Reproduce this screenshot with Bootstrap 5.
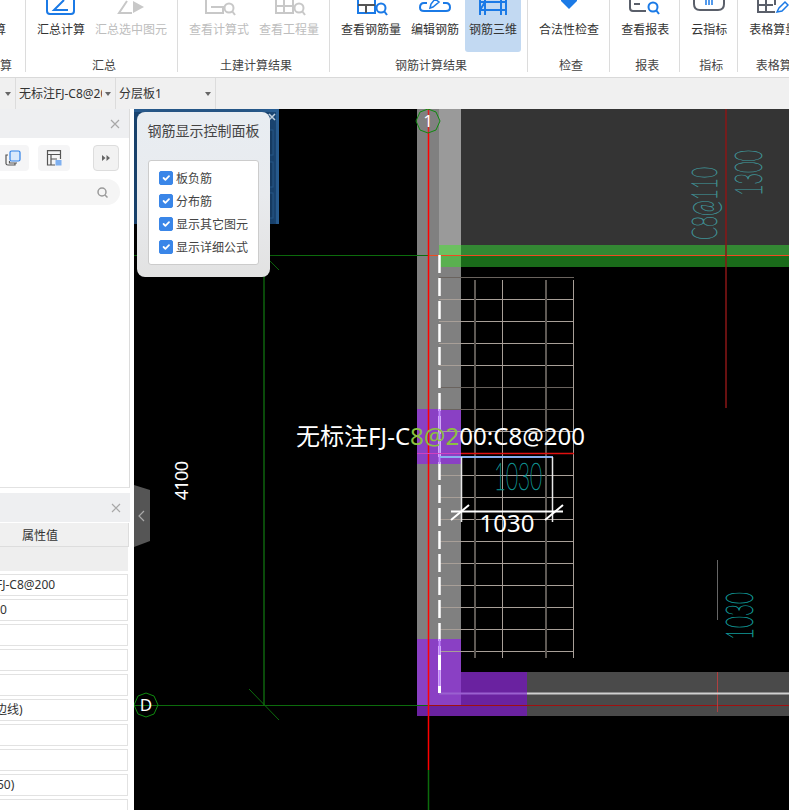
<!DOCTYPE html>
<html lang="zh-CN">
<head>
  <meta charset="UTF-8">
  <title>钢筋三维</title>
  <link href="https://cdn.jsdelivr.net/npm/bootstrap@5.3.3/dist/css/bootstrap.min.css" rel="stylesheet">
  <style>
    html, body { height: 810px; overflow: hidden; }
    body { font-family: "Noto Sans", "Noto Sans CJK SC", sans-serif; font-size: 12px; color: #333; background: #fff; }

    .rb-bar { height: 77px; }
    .rb-group { height: 72px; padding: 0 5px 0 6px; border-color: #dcdcdc !important; flex-shrink: 0; }
    .rb-group-first { width: 26px; padding: 0; }
    .rb-group-last { min-width: 78px; border: 0 !important; }
    .rb-items { height: 52px; }
    .rb-btn { padding: 0 5px; height: 52px; line-height: 16px; white-space: nowrap; }
    .rb-btn.off { color: #bdbdbd; }
    .rb-btn.on { background: #c2d9f2; border-radius: 0 0 3px 3px; padding: 0 4px; margin: 0 1px; }
    .rb-icon { display: block; height: 16px; margin-bottom: 6px; }
    .rb-label { line-height: 20px; height: 20px; margin-top: 4px; text-align: center; padding-left: 4px; white-space: nowrap; color: #444; }
    .clip-a { margin-right: 19px; padding: 22px 0 0; }
    .clip-b { margin-right: 13px; text-align: right; padding: 0; }

    .tool-bar { height: 32px; background: #f0f0f0; border-top: 1px solid #d9d9d9; }
    .combo { height: 31px; border-right: 1px solid #dcdcdc; padding: 0 4px 0 3px; flex-shrink: 0; overflow: hidden; }
    .combo-a { width: 16px; }
    .combo-b, .combo-c { width: 100px; }
    .combo-text { flex: 1 1 auto; overflow: hidden; white-space: nowrap; line-height: 31px; }
    .combo-b .combo-text { max-width: 83px; }
    .caret-d { width: 0; height: 0; border: 3px solid transparent; border-top: 4px solid #666; border-bottom: 0; flex-shrink: 0; margin-left: auto; }

    .work { height: 701px; }
    .side { width: 134px; padding-right: 4px; flex-shrink: 0; overflow: hidden; }
    .side-pane { width: 130px; border-right: 1px solid #dcdcdc; overflow: hidden; }
    .pane-top { height: 379px; border-bottom: 1px solid #e2e2e2; flex-shrink: 0; }
    .pane-bottom { margin-top: 5px; flex: 1 1 auto; min-height: 0; }
    .pane-head { height: 29px; background: #eeeff1; padding-right: 9px; flex-shrink: 0; }
    .tool-row { height: 26px; margin-top: 7px; }
    .tool-box { height: 26px; background: #f5f5f6; border-radius: 4px; }
    .tool-box-a { width: 37px; margin-left: -8px; padding-left: 13px; }
    .tool-box-b { width: 32px; margin-left: 9px; padding-left: 8px; }
    .tool-box-c { width: 26px; margin-left: 23px; background: #f2f2f2; border: 1px solid #ddd; }
    .search-pill { height: 26px; width: 140px; margin: 8px 0 0 -20px; background: #f5f5f5; border-radius: 13px; padding-right: 12px; }
    .prop-head { height: 24px; line-height: 25px; width: 129px; background: #f0f0f0; border-right: 1px solid #ddd; border-bottom: 1px solid #ddd; text-align: center; padding-right: 48px; margin-top: 1px; white-space: nowrap; flex-shrink: 0; }
    .prop-group { height: 24px; width: 128px; background: #eee; flex-shrink: 0; }
    .prop-list { margin-top: 3px; gap: 3px; }
    .prop-row { height: 22px; width: 128px; background: #fff; border: 1px solid #e2e2e2; border-left: 0; line-height: 19px; white-space: nowrap; overflow: hidden; flex-shrink: 0; }
    .val-a { margin-left: -4px; }
    .val-b { margin-left: -5px; }
    .val-c { margin-left: -3px; }

    .cad { background: #000; overflow: hidden; }
    .cad svg { display: block; }
    .cad-label { font-family: "Noto Sans", "Noto Sans CJK SC", sans-serif; }
    .cad-thin { font-family: Lato, Roboto, sans-serif; font-weight: 100; stroke-width: .7px; }
    .rebar-panel { position: absolute; left: 3px; top: 3px; width: 133px; height: 165px; border-radius: 8px; background: linear-gradient(#e8edf2, #e9ebee 50%, #e2e2e2); box-shadow: 0 0 26px rgba(0, 0, 0, .28); }
    .rebar-title { font-size: 14px; line-height: 20px; text-align: center; color: #444; padding-top: 9px; height: 48px; white-space: nowrap; }
    .rebar-box { margin: 0 11px; height: 105px; background: #fff; border: 1px solid #ccc; border-radius: 3px; padding: 10px 0 0 10px; }
    .rebar-box .form-check { min-height: 23px; height: 23px; padding-left: 17px; margin: 0; line-height: 15px; color: #444; white-space: nowrap; }
    .rebar-box .form-check-input { width: 14px; height: 14px; margin: 0 0 0 -17px; border-radius: 2px; background-color: #3a86e8; border-color: #3a86e8; opacity: 1; }
    .rebar-box .form-check-label { opacity: 1; }
  </style>
</head>
<body>

  <div class="d-flex flex-column">

    <!-- ribbon -->
    <div class="rb-bar d-flex overflow-hidden">
      <div class="rb-group rb-group-first border-end d-flex flex-column align-items-end">
        <div class="rb-items d-flex justify-content-end"><div class="rb-btn clip-a">计算</div></div>
        <div class="rb-label clip-b">计算</div>
      </div>

      <div class="rb-group border-end">
        <div class="rb-items d-flex">
          <div class="rb-btn text-center">
            <svg class="rb-icon mx-auto" width="32" height="16" viewBox="0 0 32 16" fill="none" stroke="#1b7ae6" stroke-width="2"><rect x="2" y="-8" width="27" height="22" rx="3"/><path d="M19 0 9 10H23"/></svg>
            汇总计算
          </div>
          <div class="rb-btn off text-center">
            <svg class="rb-icon mx-auto" width="30" height="16" viewBox="0 0 30 16" fill="none" stroke="#c8c8c8" stroke-width="2"><path d="M11 1 3 13H16"/><path d="M17 1 28 7 17 13Z" fill="#c8c8c8" stroke="none"/></svg>
            汇总选中图元
          </div>
        </div>
        <div class="rb-label">汇总</div>
      </div>

      <div class="rb-group border-end">
        <div class="rb-items d-flex">
          <div class="rb-btn off text-center">
            <svg class="rb-icon mx-auto" width="34" height="16" viewBox="0 0 34 16" fill="none" stroke="#c8c8c8" stroke-width="2"><path d="M4 0V13H21V7H9"/><circle cx="27" cy="8" r="4.5"/><path d="M30 11 33 15"/></svg>
            查看计算式
          </div>
          <div class="rb-btn off text-center">
            <svg class="rb-icon mx-auto" width="34" height="16" viewBox="0 0 34 16" fill="none" stroke="#c8c8c8" stroke-width="2"><path d="M4 0V13H21V0M4 6H21M12 0V13"/><circle cx="27" cy="8" r="4.5"/><path d="M30 11 33 15"/></svg>
            查看工程量
          </div>
        </div>
        <div class="rb-label">土建计算结果</div>
      </div>

      <div class="rb-group border-end">
        <div class="rb-items d-flex">
          <div class="rb-btn text-center">
            <svg class="rb-icon mx-auto" width="34" height="16" viewBox="0 0 34 16" stroke-width="2" fill="none"><path d="M4 0V13H21V0" stroke="#1b7ae6"/><path d="M4 5H21M12 5V13" stroke="#555"/><circle cx="27" cy="8" r="4.5" stroke="#1b7ae6"/><path d="M30 11 33 15" stroke="#1b7ae6"/></svg>
            查看钢筋量
          </div>
          <div class="rb-btn text-center">
            <svg class="rb-icon mx-auto" width="32" height="16" viewBox="0 0 32 16" fill="none" stroke="#1b7ae6" stroke-width="2"><path d="M8 3H5Q1 3 1 7.500 1 11 5 11H27Q31 11 31 7.500 31 3 27 3H24"/><path d="M11 8 12 4 16-1 20 2 14 7Z" stroke-width="1.500"/></svg>
            编辑钢筋
          </div>
          <div class="rb-btn on text-center">
            <svg class="rb-icon mx-auto" width="32" height="16" viewBox="0 0 32 16" fill="none" stroke="#1b7ae6" stroke-width="2"><path d="M3 0V15M29 0V15M24 0V15M8 0V15M3 2H29M3 10H29M8 2 3 10"/></svg>
            钢筋三维
          </div>
        </div>
        <div class="rb-label">钢筋计算结果</div>
      </div>

      <div class="rb-group border-end">
        <div class="rb-items d-flex">
          <div class="rb-btn text-center">
            <svg class="rb-icon mx-auto" width="18" height="16" viewBox="0 0 18 16"><path d="M1-1H17V1L9 9 1 1Z" fill="#1b7ae6"/></svg>
            合法性检查
          </div>
        </div>
        <div class="rb-label">检查</div>
      </div>

      <div class="rb-group border-end">
        <div class="rb-items d-flex">
          <div class="rb-btn text-center">
            <svg class="rb-icon mx-auto" width="34" height="16" viewBox="0 0 34 16" fill="none" stroke-width="2"><path d="M2-4V8Q2 11 5 11H18" stroke="#5a5f6a"/><path d="M6 4H12" stroke="#5a5f6a"/><circle cx="25" cy="7" r="4.500" stroke="#1b7ae6"/><path d="M28 10 31 14" stroke="#1b7ae6"/></svg>
            查看报表
          </div>
        </div>
        <div class="rb-label">报表</div>
      </div>

      <div class="rb-group border-end">
        <div class="rb-items d-flex">
          <div class="rb-btn text-center">
            <svg class="rb-icon mx-auto" width="34" height="16" viewBox="0 0 34 16" fill="none" stroke-width="2"><path d="M2-8V4Q2 10 8 10H26Q32 10 32 4V-8" stroke="#5a5f6a"/><path d="M14 0V5M17 0V5M20 0V5" stroke="#1b7ae6" stroke-width="1.500"/></svg>
            云指标
          </div>
        </div>
        <div class="rb-label">指标</div>
      </div>

      <div class="rb-group rb-group-last border-end">
        <div class="rb-items d-flex">
          <div class="rb-btn text-center">
            <svg class="rb-icon mx-auto" width="34" height="16" viewBox="0 0 34 16" fill="none" stroke-width="2"><path d="M2-4V12H19M2 5H17M10 0V12M19 0V5" stroke="#5a5f6a"/><path d="M21 12 23 8 29 2 32 5 26 11Z" stroke="#1b7ae6" stroke-width="1.500"/></svg>
            表格算量
          </div>
        </div>
        <div class="rb-label">表格算量</div>
      </div>
    </div>

    <!-- selector bar -->
    <div class="tool-bar d-flex">
      <div class="combo combo-a d-flex align-items-center"><span class="caret-d"></span></div>
      <div class="combo combo-b d-flex align-items-center"><span class="combo-text">无标注FJ-C8@200</span><span class="caret-d"></span></div>
      <div class="combo combo-c d-flex align-items-center"><span class="combo-text">分层板1</span><span class="caret-d"></span></div>
    </div>

    <div class="work d-flex">
      <!-- left panes -->
      <div class="side d-flex flex-column">
        <div class="side-pane pane-top">
          <div class="pane-head d-flex align-items-center justify-content-end">
            <svg width="10" height="10" viewBox="0 0 10 10" stroke="#a8a8a8" stroke-width="1.200"><path d="M1 1 9 9M9 1 1 9"/></svg>
          </div>
          <div class="tool-row d-flex">
            <div class="tool-box tool-box-a d-flex align-items-center">
              <svg width="16" height="16" viewBox="0 0 16 16" fill="none" stroke-width="1.200"><path d="M3 5H1V13.500Q1 15 3 15H10V13" stroke="#555"/><path d="M4.500 11V13H12" stroke="#555"/><rect x="5" y="1" width="10" height="10" rx="1.500" fill="#d9e8fb" stroke="#2f80e8"/></svg>
            </div>
            <div class="tool-box tool-box-b d-flex align-items-center">
              <svg width="16" height="16" viewBox="0 0 16 16" fill="none" stroke="#555" stroke-width="1.200"><path d="M9 15H1.500V.6H14.500V9M1.500 4.500H14.500M5 4.500V15M5 9H11"/><rect x="9.500" y="10" width="6" height="5.500" fill="#7fb0f0" stroke="none"/></svg>
            </div>
            <div class="tool-box tool-box-c d-flex align-items-center justify-content-center">
              <svg width="8" height="6" viewBox="0 0 8 6" fill="#666"><path d="M0 0 3.500 3 0 6ZM4.500 0 8 3 4.500 6Z"/></svg>
            </div>
          </div>
          <div class="search-pill d-flex align-items-center justify-content-end">
            <svg width="11" height="11" viewBox="0 0 11 11" fill="none" stroke="#9a9a9a" stroke-width="1.500"><circle cx="5" cy="5" r="4"/><path d="M8 8 10.500 10.500"/></svg>
          </div>
        </div>

        <div class="side-pane pane-bottom d-flex flex-column border-0">
          <div class="pane-head d-flex align-items-center justify-content-end">
            <svg width="10" height="10" viewBox="0 0 10 10" stroke="#a8a8a8" stroke-width="1.200"><path d="M1 1 9 9M9 1 1 9"/></svg>
          </div>
          <div class="prop-head">属性值</div>
          <div class="prop-group"></div>
          <div class="prop-list d-flex flex-column">
            <div class="prop-row"><div class="val-a">FJ-C8@200</div></div>
            <div class="prop-row">0</div>
            <div class="prop-row"></div>
            <div class="prop-row"></div>
            <div class="prop-row"></div>
            <div class="prop-row"><div class="val-b">边线)</div></div>
            <div class="prop-row"></div>
            <div class="prop-row"></div>
            <div class="prop-row"><div class="val-c">50)</div></div>
            <div class="prop-row"></div>
          </div>
        </div>
      </div>

      <!-- drawing area -->
      <div class="cad flex-fill position-relative">
        <svg id="cadView" width="655" height="701" viewBox="134 109 655 701" fill="none">
          <!-- floating blue window behind the panel -->
          <rect x="134" y="109" width="145" height="115" fill="#1c4a7a"/>
          <rect x="276" y="109" width="3" height="115" fill="#2b6299"/>
          <rect x="134" y="109" width="145" height="3" fill="#2b6299"/>
          <path d="M269 114 275 120M275 114 269 120" stroke="#cfe0f0" stroke-width="1.500"/>
          <g stroke="#2b6299" fill="#1a4470"><rect x="200" y="130" width="73" height="25"/><rect x="200" y="162" width="73" height="25"/><rect x="200" y="193" width="73" height="25"/></g>

          <!-- slab and walls -->
          <rect x="461" y="109" width="328" height="136" fill="#343434"/>
          <rect x="417" y="109" width="22" height="300" fill="#808080"/>
          <rect x="439" y="109" width="22" height="136" fill="#9a9a9a"/>
          <rect x="439" y="267" width="22" height="142" fill="#808080"/>
          <rect x="417" y="464" width="44" height="175" fill="#808080"/>
          <rect x="461" y="245" width="328" height="10" fill="#338833"/>
          <rect x="461" y="255" width="328" height="12" fill="#1a6b1a"/>
          <rect x="439" y="245" width="22" height="10" fill="#6cc060"/>
          <rect x="439" y="255" width="22" height="12" fill="#5ab050"/>
          <rect x="417" y="409" width="44" height="55" fill="#8a40c4"/>
          <rect x="527" y="672" width="262" height="44" fill="#4a4a4a"/>
          <rect x="417" y="672" width="110" height="44" fill="#6a22a0"/>
          <rect x="417" y="639" width="44" height="66" fill="#8a40c4"/>

          <g id="rebarGrid"></g>

          <!-- axis lines -->
          <path d="M134 255.500H428" stroke="#0c6b0c"/>
          <path d="M428 255.500H789" stroke="#f04a20"/>
          <path d="M134 705.500H428" stroke="#0c6b0c"/>
          <path d="M428 705.500H789" stroke="#a01010"/>
          <path d="M264 255V705" stroke="#0a4a0a" stroke-width="2"/>
          <path d="M249 240 279 270M249 689 279 720" stroke="#0c6b0c"/>
          <path d="M726 109V408" stroke="#8a1616" stroke-width="1.500"/>
          <path d="M717.500 560V620" stroke="#666"/>
          <path d="M717.500 672V712" stroke="#b04040"/>
          <path d="M428.500 109V770" stroke="#ff0000" stroke-width="1.500"/>
          <path d="M428.500 770V810" stroke="#0c6b0c" stroke-width="1.500"/>
          <path d="M439 693.500H527" stroke="#9a60d0" stroke-width="2"/>
          <path d="M527 693.500H789" stroke="#d0d0d0" stroke-width="2"/>
          <path d="M439.500 255V693" stroke="#fff" stroke-width="2.500" stroke-dasharray="18 5"/>
          <path d="M439.500 409V464M439.500 639V693" stroke="#c080ff" stroke-width="2"/>
          <path d="M439.500 655V670M439.500 686V693" stroke="#fff" stroke-width="3"/>

          <!-- axis bubbles -->
          <polygon points="428,109 436,112 440,121 436,130 428,133 420,130 416,121 420,112" stroke="#0f8a0f" fill="#808080" fill-opacity=".25"/>
          <text class="cad-label" x="428" y="127" font-size="17" fill="#fff" text-anchor="middle">1</text>
          <polygon points="146,693 154,696 158,705 154,714 146,717 138,714 134,705 138,696" stroke="#0f8a0f"/>
          <text class="cad-label" x="146" y="711" font-size="17" fill="#fff" text-anchor="middle">D</text>

          <!-- dimensions -->
          <path d="M417 453.500H461" stroke="#d040c0"/>
          <path d="M461 453.500H574" stroke="#e01010" stroke-width="1.500"/>
          <path d="M440 457H553" stroke="#88b0f0" stroke-width="2"/>
          <path d="M461.500 457V522M552.500 457V522" stroke="#e8e8e8" stroke-width="1.500"/>
          <path d="M451 511.500H563" stroke="#fff" stroke-width="2"/>
          <path d="M451 520 469 505M545 520 563 505" stroke="#fff" stroke-width="2"/>
          <text class="cad-label" x="296" y="445" font-size="24" fill="#fff" textLength="289" lengthAdjust="spacingAndGlyphs">无标注FJ-C<tspan fill="#8cc040">8@2</tspan>00:C8@200</text>
          <text class="cad-label" x="507" y="532" font-size="24" fill="#fff" text-anchor="middle">1030</text>
          <text class="cad-thin" x="494" y="490" font-size="38" fill="#10908f" stroke="#10908f" textLength="48" lengthAdjust="spacingAndGlyphs">1030</text>
          <text class="cad-thin" transform="translate(717 240) rotate(-90)" font-size="36" fill="#3f8c90" stroke="#3f8c90" textLength="73" lengthAdjust="spacingAndGlyphs">C8@110</text>
          <text class="cad-thin" transform="translate(762 196) rotate(-90)" font-size="38" fill="#3f8c90" stroke="#3f8c90" textLength="46" lengthAdjust="spacingAndGlyphs">1300</text>
          <text class="cad-thin" transform="translate(753 640) rotate(-90)" font-size="38" fill="#10908f" stroke="#10908f" textLength="48" lengthAdjust="spacingAndGlyphs">1030</text>
          <text class="cad-label" transform="translate(188 500) rotate(-90)" font-size="18" fill="#fff" textLength="39">4100</text>

          <!-- collapse handle -->
          <polygon points="134,485 150,490 150,541 134,547" fill="#555"/>
          <path d="M144 511 139 516 144 521" stroke="#aaa" stroke-width="1.200"/>
        </svg>

        <!-- control panel -->
        <div class="rebar-panel">
          <div class="rebar-title">钢筋显示控制面板</div>
          <div class="rebar-box">
            <div class="form-check"><input class="form-check-input" type="checkbox" id="chk1" checked><label class="form-check-label" for="chk1">板负筋</label></div>
            <div class="form-check"><input class="form-check-input" type="checkbox" id="chk2" checked><label class="form-check-label" for="chk2">分布筋</label></div>
            <div class="form-check"><input class="form-check-input" type="checkbox" id="chk3" checked><label class="form-check-label" for="chk3">显示其它图元</label></div>
            <div class="form-check"><input class="form-check-input" type="checkbox" id="chk4" checked><label class="form-check-label" for="chk4">显示详细公式</label></div>
          </div>
        </div>
      </div>
    </div>
  </div>

  <script>
    // rebar grid lines
    const grid = document.getElementById("rebarGrid");
    let lines = "";
    for (let y = 277; y <= 661; y += 22) {
      const dark = y === 277 || y === 387 || y === 409;
      lines += `<path d="M439 ${y + 0.5}H574" stroke="${dark ? "#6a635e" : "#a89f98"}"/>`;
    }
    [[475, "#5f5a55", 2], [502.5, "#a89f98", 1], [546, "#5f5a55", 2], [573.5, "#a89f98", 1]].forEach(v => {
      lines += `<path d="M${v[0]} 280V658" stroke="${v[1]}" stroke-width="${v[2]}"/>`;
    });
    grid.innerHTML = lines;
  </script>

  <script src="https://cdn.jsdelivr.net/npm/bootstrap@5.3.3/dist/js/bootstrap.bundle.min.js"></script>
</body>
</html>
